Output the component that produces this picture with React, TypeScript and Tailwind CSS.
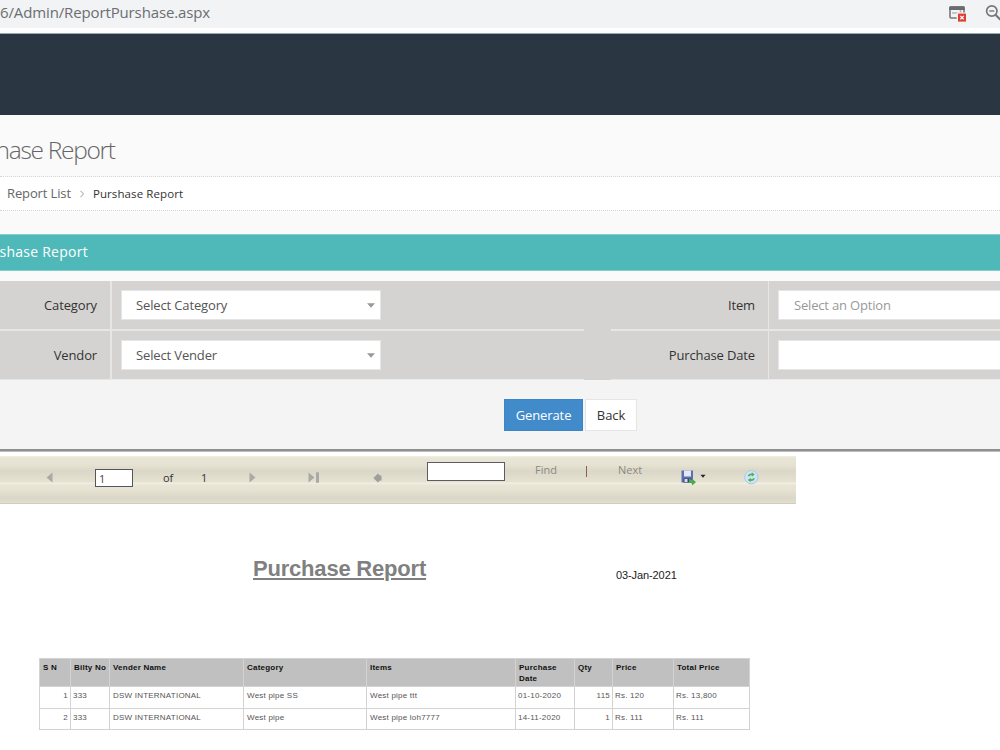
import React from 'react';

const rows = [
  { sn: 1, bilty: '333', vender: 'DSW INTERNATIONAL', category: 'West pipe SS', item: 'West pipe ttt', date: '01-10-2020', qty: 115, price: 'Rs. 120', total: 'Rs. 13,800' },
  { sn: 2, bilty: '333', vender: 'DSW INTERNATIONAL', category: 'West pipe', item: 'West pipe loh7777', date: '14-11-2020', qty: 1, price: 'Rs. 111', total: 'Rs. 111' },
];

const BrowserBar = () => (
  <div className="flex h-[33px] border-b-[5px] border-white bg-[#f1f3f4]">
    <span className="w-[948px] shrink-0 text-[15px] leading-[25px] tracking-[-0.13px] text-[#6b6e72]">6/Admin/ReportPurshase.aspx</span>
    <svg className="mt-[5px] shrink-0" width="18" height="18" viewBox="0 0 18 18">
      <rect x="2" y="2" width="14" height="11" rx="1" fill="#f1f3f4" stroke="#77787b" strokeWidth="1.6" />
      <path d="M1.2 2.5a1.3 1.3 0 0 1 1.3-1.3h13a1.3 1.3 0 0 1 1.3 1.3V5H1.2z" fill="#6a6b6e" />
      <path d="M4 8h6M12.5 5v3" stroke="#b5b6b8" strokeWidth="1.6" />
      <rect x="8.6" y="7.6" width="9.4" height="9.4" fill="#f1f3f4" />
      <rect x="10" y="8.6" width="8" height="8" fill="#e0402f" />
      <path d="m12.3 11 3.4 3.4m0-3.4-3.4 3.4" stroke="#fff" strokeWidth="1.2" />
    </svg>
    <svg className="ml-[19px] mt-[4px] shrink-0" width="18" height="18" viewBox="0 0 18 18" fill="none" stroke="#77787b">
      <circle cx="6.8" cy="7" r="5.2" strokeWidth="1.7" />
      <path d="M4.3 7h5" strokeWidth="1.4" />
      <path d="m10.5 10.8 5 5" strokeWidth="2.2" />
    </svg>
  </div>
);

const Select = ({ text }: { text: string }) => (
  <div className="flex h-[30px] w-[260px] items-center justify-between border border-[#e5e5e5] bg-white pl-[14px] pr-[5px] text-[13px] tracking-[-0.14px] text-[#555]">
    <span className="pt-[2px]">{text}</span>
    <svg width="8" height="5" viewBox="0 0 8 5"><path d="M0 0.3h8L4 4.7z" fill="#999" /></svg>
  </div>
);

const Label = ({ text }: { text: string }) => (
  <div className="flex h-full items-center justify-end pr-[13px] pt-[2px] text-[13px] tracking-[-0.14px] text-[#333]">{text}</div>
);

const FormTable = () => (
  <div className="flex h-[99px] w-[1040px] bg-[#d5d3d1]">
    <div className="grid w-[584px] grid-cols-[112px_472px] grid-rows-[50px_49px]">
      <div className="border-b-2 border-r-2 border-[#e6e6e6]"><Label text="Category" /></div>
      <div className="border-b-2 border-[#e6e6e6] pl-[9px] pt-[9px]"><Select text="Select Category" /></div>
      <div className="border-b border-r-2 border-[#e6e6e6]"><Label text="Vendor" /></div>
      <div className="border-b border-[#e9ecef] pl-[9px] pt-[9px]"><Select text="Select Vender" /></div>
    </div>
    <div className="w-[27px]" />
    <div className="grid w-[429px] grid-cols-[158px_271px] grid-rows-[50px_49px]">
      <div className="border-b-2 border-r border-[#e6e6e6]"><Label text="Item" /></div>
      <div className="border-b-2 border-[#e6e6e6] pl-[9px] pt-[9px]">
        <div className="flex h-[30px] items-center border border-[#e5e5e5] bg-white pl-[15px] pt-[2px] text-[13px] tracking-[-0.18px] text-[#999]">Select an Option</div>
      </div>
      <div className="border-b border-r border-[#e6e6e6]"><Label text="Purchase Date" /></div>
      <div className="border-b border-[#e9ecef] pl-[9px] pt-[9px]">
        <div className="h-[30px] border border-[#e5e5e5] bg-white" />
      </div>
    </div>
  </div>
);

const ReportToolbar = () => (
  <div className="h-[48px] w-[796px] border-b border-[#cfcdc2] bg-[linear-gradient(#f3f0e1_0px,#e9e6d7_2px,#e5e2d2_9px,#dad7c8_15px,#e5e2d1_26px,#f4f1e3_27px,#e9e6d7_29px,#e4e1d1_35px,#dad7c8_42px,#e2dfcd_47px)]">
    <div className="flex text-[11.5px]">
      <div className="w-[94px] pl-[46px] pt-[16px]">
        <svg width="7" height="11" viewBox="0 0 7 11"><path d="M6.5 0.5v10L0.5 5.5z" fill="#aaa9a5" /></svg>
      </div>
      <div className="pt-[13px]">
        <div className="ml-px h-[18px] w-[38px] border border-[#55555a] bg-white pl-[3px] text-[11px] leading-[17px] text-[#444]">1</div>
      </div>
      <div className="ml-[30px] w-[38px] pt-[14px] text-[11px] text-[#333]">of</div>
      <div className="w-[48px] pt-[14px] text-[11px] text-[#333]">1</div>
      <div className="w-[59px] pt-[16px]">
        <svg width="7" height="11" viewBox="0 0 7 11"><path d="M0.5 0.5v10l6-5z" fill="#aaa9a5" /></svg>
      </div>
      <div className="w-[65px] pt-[16px]">
        <svg width="12" height="11" viewBox="0 0 12 11" fill="#aaa9a5"><path d="M0.5 0.5v10l6-5zM8 0.3h3v10.4H8z" /></svg>
      </div>
      <div className="w-[54px] pt-[17px]">
        <svg width="10" height="10" viewBox="0 0 10 10" fill="#a09f9c"><path d="M0.3 5l4.7-4.5 2 1.9h1.5v5.2H7L5 9.5z" /></svg>
      </div>
      <div className="pt-[6px]">
        <div className="h-[19px] w-[78px] border border-[#5c5c62] bg-white" />
      </div>
      <div className="ml-[30px] w-[50px] pt-[6px] text-[11px] text-[#8b8984]">Find</div>
      <div className="w-[33px] pt-[10px]"><div className="ml-px h-[11px] w-px bg-[#8a5d58]" /></div>
      <div className="w-[63px] pt-[6px] text-[11px] text-[#8b8984]">Next</div>
      <div className="w-[63px] pt-[13px]">
        <svg width="26" height="17" viewBox="0 0 26 17">
          <path d="M0.5 1.5h11.5v12H0.5z" fill="#5c6fb5" />
          <path d="M3 1.5h7v6H3z" fill="#e3e9f6" />
          <path d="M2.5 9.5h8v4h-8z" fill="#36406f" />
          <path d="M3.5 10h3v3h-3z" fill="#d7ddeb" />
          <path d="M8 9.5l3 1.5V9.5l4 3.8-4 3.2v-2l-3-1z" fill="#4bab50" />
          <path d="M19.5 5.8h5L22 8.8z" fill="#222" />
        </svg>
      </div>
      <svg className="mt-[14px]" width="15" height="15" viewBox="0 0 15 15">
        <circle cx="7.3" cy="7.2" r="6.6" fill="#cfe5f7" stroke="#a5cbe8" />
        <path d="M3.8 6.3C4 4.2 6 3.2 7.8 3.6V2.2l3 2.4-3 2.1V5.4C6.8 5.1 6 5.4 5.7 6.3z" fill="#56b05c" />
        <path d="M10.8 8.2c-.2 2.1-2.2 3.1-4 2.7v1.4l-3-2.4 3-2.1v1.3c1 .3 1.8 0 2.1-.9z" fill="#56b05c" />
      </svg>
    </div>
  </div>
);

const headers = ['S N', 'Bilty No', 'Vender Name', 'Category', 'Items', 'Purchase Date', 'Qty', 'Price', 'Total Price'];

const ReportTable = () => (
  <table className="ml-[39px] mt-[74px] w-[711px] table-fixed border-collapse font-['Liberation_Sans',sans-serif] text-[8px] leading-[11px] tracking-[0.22px] text-[#555]">
    <colgroup>
      <col className="w-[31px]" />
      <col className="w-[39px]" />
      <col className="w-[134px]" />
      <col className="w-[123px]" />
      <col className="w-[149px]" />
      <col className="w-[59px]" />
      <col className="w-[38px]" />
      <col className="w-[61px]" />
      <col className="w-[76px]" />
    </colgroup>
    <thead>
      <tr className="h-[28px] bg-[#c0c0c0] text-left align-top text-[#111]">
        {headers.map(h => <th key={h} className="border border-[#d3d3d3] pl-[3px] pt-[3px] font-bold">{h}</th>)}
      </tr>
    </thead>
    <tbody>
      {rows.map(r => (
        <tr key={r.sn} className="h-[21.5px] align-top">
          <td className="border border-[#d3d3d3] px-[2px] pt-[3px] text-right">{r.sn}</td>
          <td className="border border-[#d3d3d3] px-[2px] pt-[3px]">{r.bilty}</td>
          <td className="border border-[#d3d3d3] pl-[3px] pt-[3px]">{r.vender}</td>
          <td className="border border-[#d3d3d3] pl-[3px] pt-[3px]">{r.category}</td>
          <td className="border border-[#d3d3d3] pl-[3px] pt-[3px]">{r.item}</td>
          <td className="border border-[#d3d3d3] px-[2px] pt-[3px]">{r.date}</td>
          <td className="border border-[#d3d3d3] px-[2px] pt-[3px] text-right">{r.qty}</td>
          <td className="border border-[#d3d3d3] px-[2px] pt-[3px]">{r.price}</td>
          <td className="border border-[#d3d3d3] px-[2px] pt-[3px]">{r.total}</td>
        </tr>
      ))}
    </tbody>
  </table>
);

export default function App() {
  return (
    <div className="h-[750px] w-[1000px] overflow-hidden bg-white font-['Open_Sans',sans-serif]">
      <BrowserBar />
      <div className="h-[82px] border-t border-[#9aa9ac] bg-[#2b3643]" />

      {/* Page title */}
      <div className="h-[62px] border-b border-dotted border-[#d5d5d5] bg-[#fafafa]">
        <h1 className="-ml-[49px] pt-[17px] text-[24.5px] font-light leading-[36px] tracking-[-1.3px] text-[#666]">Purshase Report</h1>
      </div>

      {/* Breadcrumb */}
      <div className="flex h-[34px] items-center border-b border-dotted border-[#d5d5d5] pl-[7px] text-[#333]">
        <span className="text-[13px] tracking-[-0.13px] text-[#666]">Report List</span>
        <svg className="ml-[9px] mr-[9px]" width="4" height="8" viewBox="0 0 4 8" fill="none" stroke="#999"><path d="M0.5 0.8 3.5 4 0.5 7.2" /></svg>
        <span className="text-[11.5px] tracking-[0.1px]">Purshase Report</span>
      </div>

      <div className="h-[70px] bg-[#fafafa] pt-[23px]">
        <div className="h-[37px] border-y border-[#83cdcd] bg-[#4fb9b9]">
          <div className="-ml-[24px] text-[14px] leading-[34px] tracking-[0.25px] text-white">Purshase Report</div>
        </div>
      </div>
      <FormTable />

      {/* Form actions */}
      <div className="flex h-[69px] gap-[2px] bg-[#f4f4f4] pl-[504px] pt-[19px]">
        <button className="h-[32px] w-[79px] border border-[#3d86c6] bg-[#428bca] pt-px text-[13px] tracking-[-0.1px] text-white">Generate</button>
        <button className="h-[32px] w-[52px] border border-[#e5e5e5] bg-white pt-px text-[13px] tracking-[-0.1px] text-[#333]">Back</button>
      </div>
      <div className="mb-[4px] h-[3px] border-b border-[#bcbcbc] bg-[#8f8f8f]" />

      <ReportToolbar />
      <div className="flex items-start pl-[253px] pt-[50px] font-['Liberation_Sans',sans-serif]">
        <h2 className="w-[363px] text-[22px] font-bold leading-[30px] tracking-[-0.2px] text-[#808080] underline decoration-2 underline-offset-2">Purchase Report</h2>
        <span className="mt-[14px] text-[11px] leading-[14px] tracking-[-0.1px] text-[#222]">03-Jan-2021</span>
      </div>
      <ReportTable />
    </div>
  );
}
